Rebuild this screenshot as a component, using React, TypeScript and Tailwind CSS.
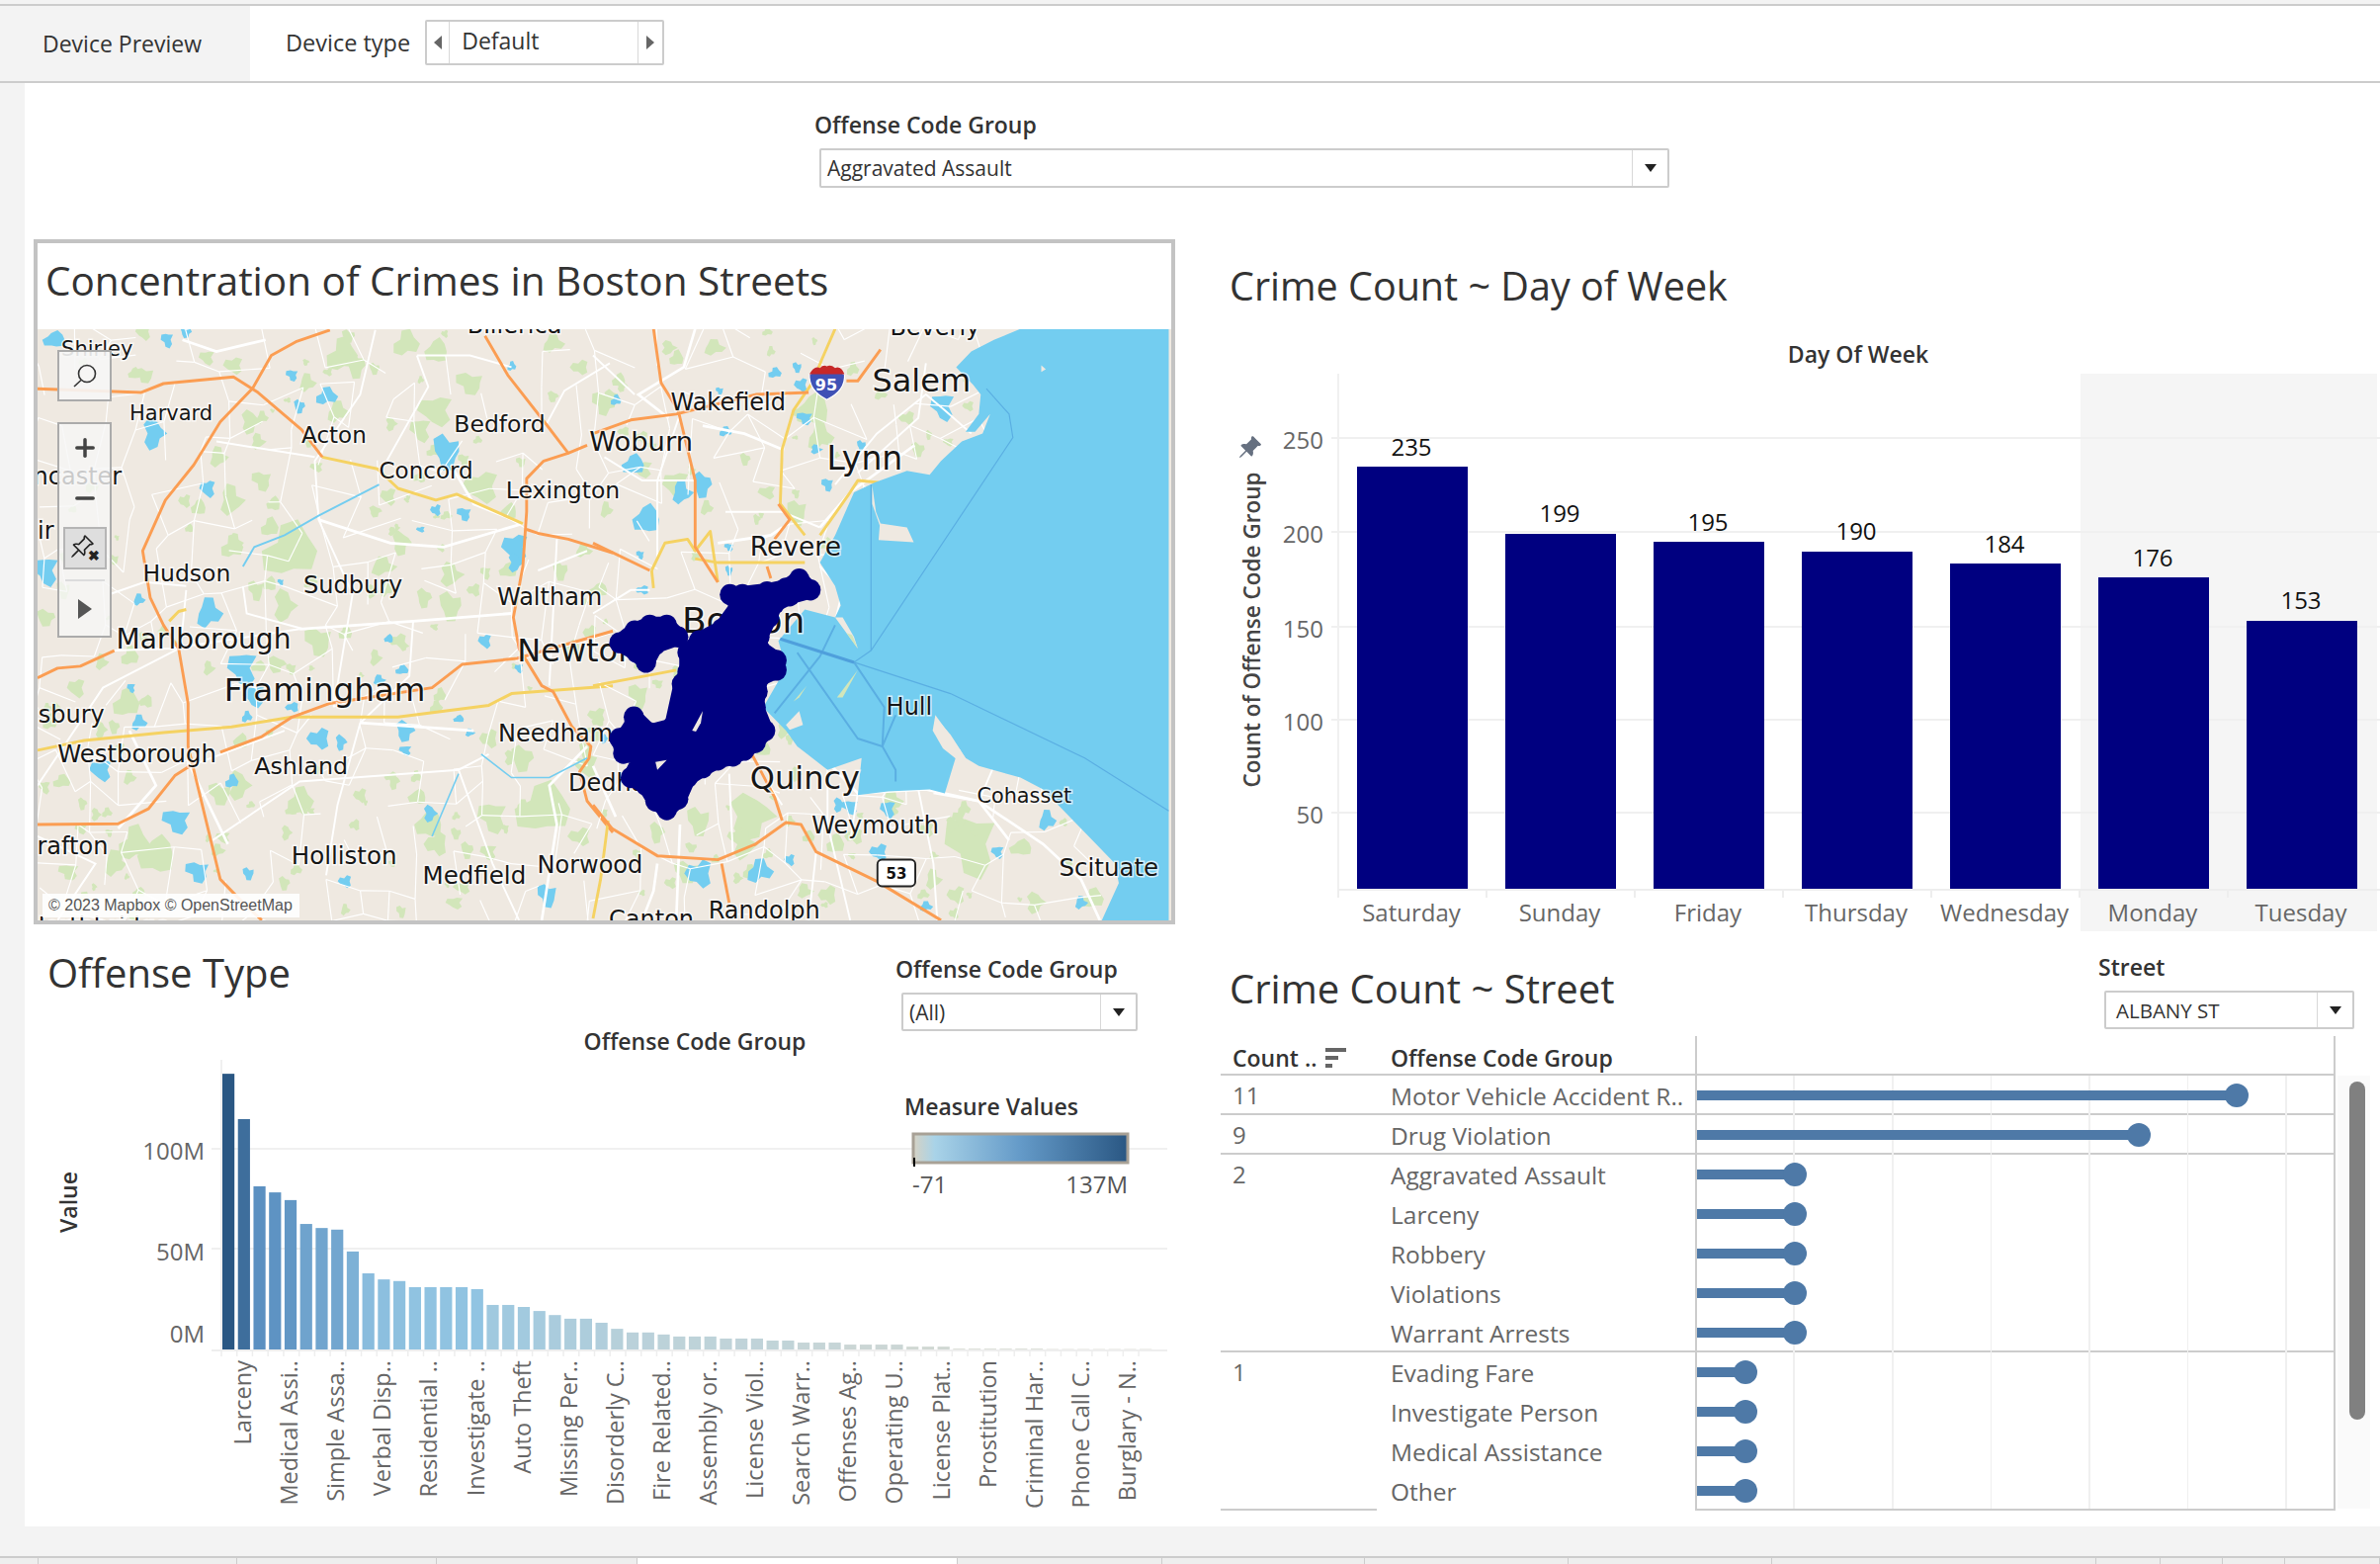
import { Minus, Plus } from 'lucide-react';
import { BsPinAngle, BsPinAngleFill } from 'react-icons/bs';

// map data is written in reference crop units, the two <g> transforms bring it to map pixels
type Blob = [number, number, number];

const greensWest: Blob[] = [
  [330, 150, 25], [495, 105, 18], [565, 125, 22], [850, 100, 35], [890, 125, 25], [760, 170, 20], [840, 245, 25],
  [1020, 70, 30], [1100, 90, 25], [1190, 170, 35], [1100, 240, 40], [1060, 290, 25], [1410, 205, 15], [1410, 70, 25],
  [1480, 130, 20], [1540, 220, 25], [610, 270, 25], [630, 320, 18], [525, 360, 22], [640, 420, 25], [560, 470, 30],
  [670, 480, 15], [710, 600, 62], [560, 590, 25], [660, 540, 20], [625, 700, 20], [700, 740, 30], [660, 685, 15],
  [785, 385, 15], [975, 460, 18], [1220, 435, 40], [1010, 580, 25], [960, 640, 30], [1140, 660, 30], [1140, 740, 30],
  [1070, 720, 20], [1200, 700, 15], [1290, 650, 20], [1430, 650, 20], [1490, 600, 20], [1530, 700, 20], [70, 770, 25],
  [790, 830, 35], [860, 810, 15], [1000, 830, 20], [680, 890, 25], [500, 900, 15], [290, 870, 20], [150, 950, 20],
  [280, 990, 30], [90, 1000, 15], [250, 1050, 15], [1100, 1000, 15], [1240, 1080, 20], [1330, 1130, 30], [1500, 1150, 25],
  [110, 1190, 20], [580, 1200, 30], [530, 1220, 30], [610, 1250, 10], [290, 1180, 15], [300, 1350, 35], [230, 1270, 12],
  [360, 1380, 40], [250, 1400, 25], [130, 1420, 25], [740, 1240, 30], [770, 1265, 10], [900, 1225, 15], [1050, 1230, 20],
  [1080, 1300, 30], [1250, 1280, 35], [1380, 1260, 62], [1240, 1370, 20], [1100, 1350, 25], [1480, 1330, 25], [990, 1190, 15],
  [700, 1450, 15], [170, 1500, 20], [1150, 1500, 20], [1170, 1460, 20],
];

const greensEast: Blob[] = [
  [200, 80, 20], [320, 80, 25], [50, 210, 20], [130, 390, 25], [220, 430, 30], [300, 490, 15], [35, 495, 15], [460, 450, 20],
  [580, 240, 35], [600, 310, 30], [760, 200, 15], [830, 260, 18], [860, 340, 18], [540, 500, 25], [470, 90, 10], [120, 970, 25],
  [10, 1020, 20], [280, 1290, 30], [420, 1280, 60], [400, 1350, 30], [640, 1350, 20], [560, 1470, 20], [170, 1320, 20],
  [1000, 1350, 62], [1130, 1360, 25], [1170, 1500, 25], [1320, 1490, 25], [900, 1440, 20], [790, 1240, 25], [250, 1420, 35],
  [620, 1480, 20], [960, 1480, 20], [460, 40, 12], [690, 1330, 20], [980, 1260, 15],
];

const lakesWest: Blob[] = [
  [90, 60, 25], [390, 60, 15], [440, 40, 15], [720, 150, 15], [810, 205, 25], [740, 230, 15], [355, 300, 30], [1130, 345, 35],
  [1300, 128, 10], [497, 440, 18], [1175, 505, 18], [1100, 495, 12], [1060, 545, 10], [1310, 590, 30], [1310, 630, 20],
  [70, 650, 30], [315, 725, 14], [500, 760, 30], [690, 680, 8], [975, 825, 10], [590, 900, 35], [620, 970, 25], [1010, 905, 15],
  [950, 930, 15], [1020, 1060, 25], [1160, 1030, 12], [1190, 1065, 12], [790, 1080, 25], [850, 1090, 15], [1020, 1110, 15],
  [560, 1190, 15], [315, 1040, 18], [295, 950, 10], [215, 1160, 25], [415, 1290, 35], [470, 1420, 30], [605, 1425, 15],
  [860, 1445, 15], [1085, 1272, 18], [1395, 1480, 25], [720, 1000, 15], [600, 1025, 12], [1320, 900, 10], [1230, 830, 15],
];

const lakesEast: Blob[] = [
  [60, 215, 12], [335, 190, 10], [350, 295, 15], [540, 130, 12], [550, 175, 15], [480, 145, 15], [560, 260, 20], [590, 340, 15],
  [710, 330, 12], [620, 430, 15], [105, 380, 25], [290, 430, 25], [235, 450, 25], [140, 520, 30], [130, 700, 15], [125, 610, 10],
  [360, 590, 12], [360, 650, 10], [440, 1420, 30], [280, 1425, 30], [650, 1250, 15], [680, 1255, 20], [780, 1260, 18],
  [1070, 1370, 15], [1200, 1290, 20], [755, 1370, 20], [30, 1080, 10], [520, 1390, 12], [880, 1510, 15], [1290, 1500, 15],
  [925, 230, 28],
];

const whiteWest = [
  '430,60 520,90 650,60', '940,35 900,200 780,370 790,520 880,710 830,1000', '520,320 780,360', '790,520 980,580 1120,590 1330,530',
  '240,710 330,680 440,690', '440,700 430,800 420,850', '740,800 1040,780 1300,760', '250,855 400,850 740,800',
  '1040,780 1030,920 900,1040 840,1250 810,1430', '900,1040 1200,1060', '47,1200 220,950 420,850', '450,1150 700,1060',
  '450,1150 550,1350', '510,1340 740,1190 1160,1160 1240,1120', '1050,100 1080,180 970,370', '1140,380 1200,480 1330,530',
  '1300,130 1190,100 1050,100', '1370,650 1500,600', '1310,880 1560,810', '1420,570 1410,760 1400,945', '1560,120 1440,190 1390,280',
  '1500,1100 1400,1200 1420,1300 1380,1545', '1160,1160 1250,1400 1320,1545', '47,1330 200,1400 100,1545', '290,1060 360,1200 260,1310',
  '590,690 600,760 750,800',
];

const whiteEast = [
  '270,32 240,130 120,200 200,260', '0,100 110,200', '230,250 170,420 170,620', '290,280 400,300 500,340', '30,360 130,420 270,420',
  '880,120 860,260 700,400', '600,540 680,450 850,330', '1000,300 930,240 880,200 750,300 640,430', '350,500 500,500 600,540',
  '330,580 470,560 500,540', '0,760 100,700 150,700', '500,870 560,850', '500,1020 620,1140 700,1220 880,1210 1020,1240 1190,1350 1290,1440 1340,1545',
  '620,1140 620,1300 680,1545', '360,1170 370,1380', '230,1300 220,1545', '700,1220 680,1340', '860,1210 900,1400 910,1545',
  '1020,1240 1100,1340', '1060,1150 1020,1240 900,1220', '440,1160 500,1250', '0,1150 60,1280', '640,780 660,700 600,640',
  '590,1370 570,1545', '170,1400 160,1470 130,1545',
];

const orangeWest = [
  '47,185 320,195 380,172 565,155 630,195 745,290 800,360',
  '1340,545 1370,555 1450,570 1568,605',
  '820,35 730,65 665,100 615,185 530,270 460,380 385,470 325,600 345,720 380,790 420,850 445,990 445,1100 490,1280 530,1440 580,1490 640,1545',
  '47,925 100,900 160,895 250,855',
  '530,1115 640,1075 720,1025 820,990 1090,950 1170,890 1315,875 1568,805',
  '1230,50 1290,150 1395,280 1450,350 1500,330',
  '1450,350 1385,370 1340,415 1340,500 1330,640 1305,770 1320,850 1380,945 1410,960 1460,1050 1510,1100 1505,1130 1480,1165 1500,1240 1568,1320',
  '47,1300 260,1298 340,1260 410,1175 450,1150',
];

const yellowWest = [
  '800,360 945,390 1000,440 1100,470 1155,455 1330,530',
  '47,1110 170,1085 380,1065 560,1050 720,1025 1000,1025 1240,995 1300,965 1568,945',
  '395,780 420,755 440,750',
];

const orangeEast = [
  '0,580 150,650', '160,32 180,170 225,240 270,420 270,590 330,680', '0,300 100,265 220,250 430,200 570,195', '760,85 700,165 670,165',
  '0,1250 50,1310 170,1380 330,1390 430,1350 510,1295 550,1300 590,1370 750,1445 920,1545', '500,1290 480,1230 420,1120', '340,1400 360,1500',
  '490,480 520,520 480,570', '460,640 470,670',
];

const yellowEast = [
  '640,32 605,110 580,170 530,240 500,340 495,480 560,560', '270,620 330,630 560,630', '600,560 680,450 700,420 755,425',
  '155,650 160,695', '155,650 190,580 250,570 270,600 310,550 330,680', '0,945 220,905', '40,1290 20,1440 0,1540',
];

const lanes = [
  '495,825 690,885 735,855 1110,310 1100,250 1040,185', '735,855 735,430', '690,885 945,965 1300,1130 1522,1265',
  '690,885 770,1000 765,1100 800,1160 800,1190', '540,860 700,1080 765,1100', '800,1020 765,1100', '640,790 600,870 480,1015',
];

const sea =
  '1130,32 1522,32 1522,1545 1345,1545 1390,1450 1380,1400 1290,1310 1250,1270 1190,1210 1130,1180 1020,1150 985,1130 945,1070 905,1025 925,1090 960,1125 930,1220 890,1210 780,1215 700,1225 710,1130 620,1160 540,1100 510,1060 450,1000 510,900 490,830 560,750 640,770 655,740 640,690 600,630 640,560 690,450 745,425 830,395 890,405 920,370 975,320 1030,300 1050,250 1010,295 985,295 1020,250 1025,200 1005,175 960,130 1000,90 1060,60';

// bits of land lying on the sea polygon: Nahant, Hull, Squantum, Winthrop spit, islands
const seaLand = [
  '738,432 748,500 760,530 830,540 848,578 755,572 758,535 738,480',
  '985,1130 950,1080 905,1020 898,1060 925,1105 970,1140',
  '510,1045 545,1010 555,1045 520,1058',
  '640,770 670,810 700,850 690,820 660,770',
  '1185,125 1197,135 1185,142',
];

const blobOutline: [number, number][] = [
  [545, 672], [575, 700], [520, 715], [480, 735], [465, 770], [440, 820], [440, 850], [485, 880], [485, 905], [440, 925], [435, 960],
  [430, 1000], [455, 1060], [430, 1090], [400, 1110], [370, 1125], [330, 1135], [290, 1155], [250, 1180], [225, 1235], [195, 1262],
  [165, 1240], [140, 1200], [100, 1180], [130, 1125], [80, 1118], [70, 1080], [100, 1060], [108, 1025], [150, 1065], [210, 1050],
  [235, 940], [250, 910], [250, 860], [280, 830], [340, 800], [385, 740], [362, 712], [395, 712], [460, 705], [510, 695],
];

const blobWest: [number, number][] = [
  [70, 835], [110, 805], [150, 790], [195, 790], [225, 820], [165, 840], [140, 885], [115, 860],
];

const westLabels: [string, number, number, number][] = [
  ['Shirley', 110, 100, 21], ['Harvard', 290, 265, 21], ['Bedford', 1148, 295, 23.5], ['Acton', 745, 323, 23], ['Concord', 950, 415, 23],
  ['Lexington', 1285, 465, 23.5], ['Hudson', 325, 678, 23.5], ['Sudbury', 750, 708, 24], ['Waltham', 1262, 738, 24], ['Marlborough', 255, 850, 28],
  ['Newton', 1315, 882, 32], ['Framingham', 540, 985, 32.5], ['Westborough', 100, 1140, 24.3], ['Ashland', 620, 1170, 23.7], ['Needham', 1265, 1087, 24],
  ['Holliston', 718, 1402, 24.5], ['Medfield', 1065, 1452, 24.5], ['Norwood', 1368, 1423, 24], ['Grafton', -3, 1375, 24], ['Shrewsbury', -145, 1040, 24],
  ['Lancaster', -38, 430, 24], ['ir', 47, 570, 24], ['Dedham', 1450, 1215, 24], ['Billerica', 1183, 42, 24], ['Northbridge', 20, 1580, 24],
];

const eastLabels: [string, number, number, number][] = [
  ['Beverly', 785, 47, 24], ['Wakefield', 205, 240, 24], ['Woburn', -10, 345, 27.3], ['Salem', 738, 192, 32], ['Lynn', 618, 392, 33], ['Revere', 415, 612, 26.5],
  ['Boston', 235, 810, 36], ['Hull', 775, 1018, 24], ['Quincy', 415, 1208, 32], ['Cohasset', 1015, 1245, 20.8], ['Weymouth', 578, 1322, 23.9],
  ['Scituate', 1232, 1432, 24.5], ['Randolph', 305, 1540, 24], ['Canton', 42, 1562, 24],
];

const blobPoints = ([cx, cy, r]: Blob) => {
  const pts: string[] = [];
  const squash = 0.7 + 0.5 * Math.abs(Math.sin(cx * 0.13 + cy * 0.07));
  for (let i = 0; i < 10; i++) {
    const wob = 0.5 + 0.8 * Math.abs(Math.sin(cx * 0.37 + cy * 0.11 + i * 2.3));
    const a = (i / 10) * Math.PI * 2;
    pts.push(`${(cx + Math.cos(a) * r * wob).toFixed(1)},${(cy + Math.sin(a) * r * wob * squash).toFixed(1)}`);
  }
  return pts.join(' ');
};

// little generator so the small-road mesh and the small parks stay the same on every render
const seeded = (seed: number) => () => {
  seed = (seed * 16807) % 2147483647;
  return seed / 2147483647;
};

const smallRoads = (seed: number, x0: number, x1: number) => {
  const rnd = seeded(seed);
  const step = 85;
  const grid: [number, number][][] = [];
  for (let gx = x0; gx <= x1; gx += step) {
    const col: [number, number][] = [];
    for (let gy = 30; gy <= 1560; gy += step) col.push([gx + (rnd() - 0.5) * 70, gy + (rnd() - 0.5) * 70]);
    grid.push(col);
  }
  const out: string[] = [];
  grid.forEach((col, i) =>
    col.forEach((p, j) => {
      if (grid[i + 1] && rnd() < 0.5) out.push(`${p.join(',')} ${grid[i + 1][j].join(',')}`);
      if (col[j + 1] && rnd() < 0.5) out.push(`${p.join(',')} ${col[j + 1].join(',')}`);
    }),
  );
  return out;
};

const smallParks = (seed: number, x0: number, x1: number, n: number): Blob[] => {
  const rnd = seeded(seed);
  return Array.from({ length: n }, () => [x0 + rnd() * (x1 - x0), 30 + rnd() * 1510, 6 + rnd() * 12] as Blob);
};

const meshWest = smallRoads(4711, 40, 1568);
const meshEast = smallRoads(9127, 10, 1400);
const parksWest = smallParks(2203, 40, 1568, 110);
const parksEast = smallParks(6151, 0, 1400, 90);

function MapLayers({ greens, lakes, white, orange, yellow, mesh }: { greens: Blob[]; lakes: Blob[]; white: string[]; orange: string[]; yellow: string[]; mesh: string[] }) {
  return (
    <>
      {greens.map((b, i) => <polygon key={i} points={blobPoints(b)} fill="#d2e6ba" />)}
      {lakes.map((b, i) => <polygon key={i} points={blobPoints(b)} fill="#73cdf0" />)}
      {mesh.map((p, i) => <polyline key={i} points={p} fill="none" stroke="#fff" strokeWidth={3} />)}
      {white.map((p, i) => <polyline key={i} points={p} fill="none" stroke="#fff" strokeWidth={i % 3 === 0 ? 7 : 5} />)}
      {yellow.map((p, i) => <polyline key={i} points={p} fill="none" stroke="#f5d262" strokeWidth={7.5} strokeLinejoin="round" />)}
      {orange.map((p, i) => <polyline key={i} points={p} fill="none" stroke="#fb9d52" strokeWidth={7.5} strokeLinejoin="round" />)}
    </>
  );
}

function MapLabel({ text, x, y, size }: { text: string; x: number; y: number; size: number }) {
  return (
    <text x={x} y={y} fontSize={size} fill="#161616" stroke="#ffffff" strokeOpacity={0.7} strokeWidth={3} paintOrder="stroke">
      {text}
    </text>
  );
}

function BostonMap() {
  return (
    <div className="relative h-[598px] w-[1147px] overflow-hidden">
      <svg viewBox="0 0 1147 598" className="block h-[598px] w-[1147px] font-['DejaVu_Sans',sans-serif]">
        <rect width="1147" height="598" fill="#efe9e1" />
        <g transform="translate(-18,-13) scale(.3827,.3954)">
          <MapLayers greens={[...greensWest, ...parksWest]} lakes={lakesWest} white={whiteWest} orange={orangeWest} yellow={yellowWest} mesh={meshWest} />
          <polyline points="590,640 620,590 700,560 790,510 870,470 950,430" fill="none" stroke="#73cdf0" strokeWidth={5} />
          <polyline points="1220,1120 1300,1180 1400,1180 1500,1130" fill="none" stroke="#73cdf0" strokeWidth={4} />
          <polyline points="1160,1170 1090,1330" fill="none" stroke="#73cdf0" strokeWidth={4} />
        </g>
        <g transform="translate(562,-13) scale(.3827,.3954)">
          <MapLayers greens={[...greensEast, ...parksEast]} lakes={lakesEast} white={whiteEast} orange={orangeEast} yellow={yellowEast} mesh={meshEast} />
          <polygon points={sea} fill="#73cdf0" />
          {seaLand.map((p, i) => <polygon key={i} points={p} fill="#efe9e1" />)}
          {lanes.map((p, i) => <polyline key={i} points={p} fill="none" stroke="#5aaee2" strokeWidth={i > 2 ? 5 : 3} />)}
          <polyline points="495,825 690,885" fill="none" stroke="#4f9fdc" strokeWidth={8} />
          <polygon points="680,930 700,905 660,975 645,975" fill="#d2e6ba" />
          <polygon points="530,985 565,945 545,975" fill="#d2e6ba" />
          <polygon points="670,810 700,850 685,815" fill="#d2e6ba" />
        </g>
        {westLabels.map(([t, x, y, s]) => <MapLabel key={t} text={t} x={x * 0.3827 - 18} y={y * 0.3954 - 13} size={s} />)}
        {eastLabels.map(([t, x, y, s]) => <MapLabel key={t} text={t} x={x * 0.3827 + 562} y={y * 0.3954 - 13} size={s} />)}
        <g transform="translate(562,-13) scale(.3827,.3954)">
          <path d="M572,148 Q595,138 618,128 Q642,138 665,148 Q668,190 618,213 Q570,190 572,148Z" fill="#3f51b5" stroke="#fff" strokeWidth={3} />
          <path d="M572,148 Q585,125 600,132 Q610,122 618,128 Q628,122 640,132 Q655,125 665,148Z" fill="#c62828" />
          <rect x="752" y="1390" width="100" height="68" rx="12" fill="#fff" stroke="#222" strokeWidth={5} />
          <polygon points={blobOutline.map((p) => p.join(',')).join(' ')} fill="#000080" stroke="#000080" strokeWidth={44} strokeLinejoin="round" />
          <polygon points={blobWest.map((p) => p.join(',')).join(' ')} fill="#000080" stroke="#000080" strokeWidth={44} strokeLinejoin="round" />
          {blobOutline.map(([x, y], i) => <circle key={i} cx={x} cy={y} r={27} fill="#000080" />)}
          {blobWest.map(([x, y], i) => <circle key={i} cx={x} cy={y} r={27} fill="#000080" />)}
          <polygon points="290,1010 262,1060 272,1062 285,1040" fill="#efe9e1" />
          <polygon points="165,1140 195,1135 170,1160" fill="#efe9e1" />
        </g>
        <text x="798" y="62" fontSize="16" fontWeight="700" fill="#fff" textAnchor="middle">95</text>
        <text x="869" y="556" fontSize="15" fontWeight="700" fill="#111" textAnchor="middle">53</text>
      </svg>

      {/* map tools */}
      <div className="absolute left-[20px] top-[21px] flex h-[52px] w-[55px] items-center justify-center border-2 border-[#ababab] bg-[#f6f6f6]/90">
        <svg viewBox="0 0 26 26" className="h-[26px] w-[26px]" fill="none" stroke="#333" strokeWidth="1.6">
          <circle cx="15" cy="11" r="8.5" />
          <line x1="9" y1="17.5" x2="2" y2="24" />
        </svg>
      </div>
      <div className="absolute left-[20px] top-[94px] flex h-[218px] w-[55px] flex-col items-center border-2 border-[#ababab] bg-[#f6f6f6]/80">
        <Plus className="mt-[10px] text-[#444]" size={28} strokeWidth={3} />
        <Minus className="mt-[23px] text-[#444]" size={28} strokeWidth={3} />
        <div className="mt-[15px] flex h-[43px] w-[44px] items-center justify-center border-2 border-[#b5b5b5] bg-[#dedede]">
          <BsPinAngle className="-mt-[4px] text-[#222]" size={26} />
          <span className="-ml-[7px] mt-[14px] text-[14px] font-bold leading-none text-[#222]">✖</span>
        </div>
        <div className="mt-[10px] h-[2px] w-[40px] bg-[#dcdcdc]" />
        <svg viewBox="0 0 14 20" className="mt-[18px] h-[20px] w-[14px]">
          <polygon points="0,0 14,10 0,20" fill="#555" />
        </svg>
      </div>
      <div className="absolute bottom-[3px] left-[5px] h-[24px] w-[260px] bg-white/90 pl-[6px] font-['Liberation_Sans',sans-serif] text-[16px] leading-[24px] text-[#555]">
        © 2023 Mapbox © OpenStreetMap
      </div>
    </div>
  );
}

function Arrow({ className, d }: { className?: string; d: 'down' | 'left' | 'right' }) {
  const pts = d === 'down' ? '0,0 12,0 6,8' : d === 'left' ? '8,0 8,14 0,7' : '0,0 8,7 0,14';
  const box = d === 'down' ? '0 0 12 8' : '0 0 8 14';
  return (
    <svg viewBox={box} className={className}>
      <polygon points={pts} fill={d === 'down' ? '#222' : '#666'} />
    </svg>
  );
}

function Dropdown({ text, className }: { text: string; className: string }) {
  return (
    <div className={`flex items-stretch rounded-[2px] border-2 border-[#cccccc] bg-white ${className}`}>
      <div className="flex flex-1 items-center pl-[6px] pt-[2px] text-[21px] text-[#333]">{text}</div>
      <div className="flex w-[36px] items-center justify-center border-l border-[#d8d8d8]">
        <Arrow d="down" className="h-[8px] w-[12px]" />
      </div>
    </div>
  );
}

const days = [
  { day: 'Saturday', n: 235, x: 1373, top: 472, ly: 452 },
  { day: 'Sunday', n: 199, x: 1523, top: 540, ly: 519 },
  { day: 'Friday', n: 195, x: 1673, top: 548, ly: 528 },
  { day: 'Thursday', n: 190, x: 1823, top: 558, ly: 537 },
  { day: 'Wednesday', n: 184, x: 1973, top: 570, ly: 550 },
  { day: 'Monday', n: 176, x: 2123, top: 584, ly: 564 },
  { day: 'Tuesday', n: 153, x: 2273, top: 628, ly: 607 },
];

const ticks: [string, number][] = [['250', 443], ['200', 538], ['150', 634], ['100', 728], ['50', 822]];

function DayChart() {
  return (
    <svg viewBox="1200 338 1208 607" className="block h-[607px] w-[1208px]">
      <rect x="2105" y="378" width="300" height="564" fill="#f5f5f5" />
      {ticks.map(([t, y]) => (
        <g key={t}>
          <line x1="1347" x2="2408" y1={y} y2={y} stroke="#f0f0f0" strokeWidth="2" />
          <text x="1339" y={y + 11} textAnchor="end" fontSize="24" fill="#666">{t}</text>
        </g>
      ))}
      <line x1="1354" x2="1354" y1="378" y2="900" stroke="#f0f0f0" strokeWidth="2" />
      <line x1="1354" x2="2408" y1="900" y2="900" stroke="#eeeeee" strokeWidth="2" />
      {days.map((d) => (
        <g key={d.day}>
          <rect x={d.x} y={d.top} width="112" height={899 - d.top} fill="#000080" />
          <text x={d.x + 55} y={d.ly + 9} textAnchor="middle" fontSize="24" fill="#111">{d.n}</text>
          <text x={d.x + 55} y="932" textAnchor="middle" fontSize="24" fill="#666">{d.day}</text>
          <line x1={d.x - 19} x2={d.x - 19} y1="900" y2="908" stroke="#eeeeee" strokeWidth="2" />
        </g>
      ))}
      <text x="1880" y="367" textAnchor="middle" fontSize="23" fontWeight="600" fill="#333">Day Of Week</text>
      <text transform="translate(1275,637) rotate(-90)" textAnchor="middle" fontSize="22.5" fontWeight="600" fill="#444">Count of Offense Code Group</text>
      <foreignObject x="1252" y="440" width="26" height="26">
        <BsPinAngleFill className="text-[#667080]" size={25} />
      </foreignObject>
    </svg>
  );
}

const offenseTops = [
  357, 469, 635, 650, 669, 728, 738, 742, 796, 850, 865, 869, 884, 884, 884, 884, 889, 928, 928, 933, 943, 953, 962, 962, 972, 987, 996, 996,
  1001, 1006, 1006, 1006, 1011, 1011, 1011, 1016, 1016, 1021, 1021, 1021, 1026, 1026, 1026, 1026, 1031, 1031, 1031, 1036, 1036, 1036, 1036,
  1036, 1036, 1037, 1037, 1037, 1037, 1037, 1037, 1037,
];

const offenseLabels = [
  'Larceny', 'Medical Assi..', 'Simple Assa..', 'Verbal Disp..', 'Residential ..', 'Investigate ..', 'Auto Theft', 'Missing Per..', 'Disorderly C..',
  'Fire Related..', 'Assembly or..', 'License Viol..', 'Search Warr..', 'Offenses Ag..', 'Operating U..', 'License Plat..', 'Prostitution', 'Criminal Har..',
  'Phone Call C..', 'Burglary - N..',
];

const mix = (a: number[], b: number[], t: number) => {
  const c = a.map((v, i) => Math.round(v + (b[i] - v) * t));
  return `rgb(${c[0]},${c[1]},${c[2]})`;
};

const barColor = (t: number) => {
  if (t < 0.03) return mix([216, 218, 208], [194, 212, 216], t / 0.03);
  if (t < 0.22) return mix([194, 212, 216], [145, 196, 226], (t - 0.03) / 0.19);
  if (t < 0.6) return mix([145, 196, 226], [90, 143, 192], (t - 0.22) / 0.38);
  return mix([90, 143, 192], [42, 87, 131], (t - 0.6) / 0.4);
};

function OffenseChart() {
  return (
    <svg viewBox="25 1044 1175 500" className="block h-[500px] w-[1175px]">
      <text x="703" y="1062" textAnchor="middle" fontSize="23" fontWeight="600" fill="#333">Offense Code Group</text>
      <text transform="translate(78,1216) rotate(-90)" textAnchor="middle" fontSize="23" fontWeight="600" fill="#333">Value</text>
      <line x1="224" x2="224" y1="1072" y2="1366" stroke="#f0f0f0" strokeWidth="2" />
      <line x1="214" x2="1181" y1="1162" y2="1162" stroke="#f0f0f0" strokeWidth="2" />
      <line x1="214" x2="1181" y1="1263" y2="1263" stroke="#f0f0f0" strokeWidth="2" />
      <line x1="214" x2="1181" y1="1366" y2="1366" stroke="#eeeeee" strokeWidth="2" />
      <text x="207" y="1173" textAnchor="end" fontSize="24" fill="#666">100M</text>
      <text x="207" y="1275" textAnchor="end" fontSize="24" fill="#666">50M</text>
      <text x="207" y="1358" textAnchor="end" fontSize="24" fill="#666">0M</text>
      {offenseTops.map((top, i) => {
        const h = (1038 - top) / 2.442;
        return (
          <g key={i}>
            <rect x={225 + i * 15.73} y={1365 - h} width="12.2" height={h} fill={barColor(h / 279)} />
            <line x1={224 + i * 15.73} x2={224 + i * 15.73} y1="1366" y2="1372" stroke="#eeeeee" strokeWidth="1.5" />
          </g>
        );
      })}
      {offenseLabels.map((t, i) => (
        <text key={t} transform={`translate(${254 + i * 47.1},1376) rotate(-90)`} textAnchor="end" fontSize="23.5" fill="#666">{t}</text>
      ))}
      <text x="915" y="1128" fontSize="23" fontWeight="600" fill="#333">Measure Values</text>
      <defs>
        <linearGradient id="legend">
          <stop offset="0" stopColor="#d6d2c4" />
          <stop offset="0.1" stopColor="#a9d3e8" />
          <stop offset="0.5" stopColor="#649ac8" />
          <stop offset="1" stopColor="#2a5783" />
        </linearGradient>
      </defs>
      <rect x="924" y="1147" width="217" height="29" fill="url(#legend)" stroke="#a8a196" strokeWidth="3" />
      <line x1="925" x2="925" y1="1171" y2="1180" stroke="#000" strokeWidth="2" />
      <text x="923" y="1207" fontSize="24" fill="#555">-71</text>
      <text x="1141" y="1207" textAnchor="end" fontSize="24" fill="#555">137M</text>
    </svg>
  );
}

const streetGroups = [
  { n: 11, names: ['Motor Vehicle Accident R..'] },
  { n: 9, names: ['Drug Violation'] },
  { n: 2, names: ['Aggravated Assault', 'Larceny', 'Robbery', 'Violations', 'Warrant Arrests'] },
  { n: 1, names: ['Evading Fare', 'Investigate Person', 'Medical Assistance', 'Other'] },
];

function StreetTable() {
  return (
    <div className="ml-[35px] flex">
      <div className="w-[1128px]">
        <div className="flex h-[44px]">
          <div className="flex w-[172px] items-end gap-[8px] pb-[2px] pl-[12px] text-[23px] font-semibold leading-[32px] text-[#333]">
            Count ..
            <svg viewBox="0 0 21 20" className="mb-[6px] h-[20px] w-[21px]">
              <rect width="21" height="4" fill="#666" />
              <rect y="8" width="13" height="4" fill="#666" />
              <rect y="16" width="7" height="4" fill="#666" />
            </svg>
          </div>
          <div className="flex w-[308px] items-end pb-[2px] text-[23px] font-semibold leading-[32px] text-[#333]">Offense Code Group</div>
          <div className="mt-[4px] w-[648px] border-x-2 border-[#cccccc]" />
        </div>
        {streetGroups.map((g) => (
          <div key={g.n} className="-mt-[2px] border-t-2 border-[#cccccc]">
            {g.names.map((name, i) => (
              <div key={name} className="flex h-10">
                <div className="w-[172px] pl-[12px] text-[24px] leading-[39px] text-[#666]">{i === 0 ? g.n : ''}</div>
                <div className="w-[308px] truncate text-[24.5px] leading-[42px] text-[#666]">{name}</div>
                <div className="flex w-[648px] items-center border-x-2 border-[#cccccc] bg-[repeating-linear-gradient(90deg,transparent_0,transparent_97.5px,#f0f0f0_97.5px,#f0f0f0_99.5px)]">
                  <div className="h-[10px] bg-[#4e79a7]" style={{ width: 49.75 * g.n - 1 }} />
                  <div className="-ml-[12px] -mt-[1px] h-6 w-6 rounded-full bg-[#4e79a7]" />
                </div>
              </div>
            ))}
          </div>
        ))}
        <div className="-mt-[2px] flex h-[2px]">
          <div className="w-[158px] bg-[#cccccc]" />
          <div className="w-[322px]" />
          <div className="w-[648px] bg-[#cccccc]" />
        </div>
      </div>
      <div className="ml-[2px] mt-[44px] h-[438px] w-[33px] bg-[#fafafa] pl-[12px] pt-[6px]">
        <div className="h-[342px] w-[16px] rounded-full bg-[#808080]" />
      </div>
    </div>
  );
}

const tabEdges = [0, 39, 240, 442, 645, 969, 1176, 1381, 1587, 1793, 2121, 2186, 2249, 2312, 2408];

export default function App() {
  return (
    <div className="flex h-[1582px] w-[2408px] flex-col overflow-hidden bg-white font-['Open_Sans',sans-serif] text-[#333]">
      <div className="h-1 bg-[#f3f3f3]" />
      <header className="flex h-[80px] items-stretch border-y-2 border-[#cccccc]">
        <div className="flex w-[253px] items-center bg-[#f3f3f3] pl-[43px] text-[23px] text-[#333]">Device Preview</div>
        <div className="ml-[36px] flex items-center text-[23.5px] text-[#333]">Device type</div>
        <div className="ml-[15px] mt-[14px] flex h-[46px] w-[242px] rounded-[2px] border-2 border-[#cccccc]">
          <div className="flex w-[23px] items-center justify-center border-r border-[#d8d8d8]">
            <Arrow d="left" className="h-[14px] w-[8px]" />
          </div>
          <div className="flex-1 pl-[12px] text-[23px] leading-[38px] text-[#333]">Default</div>
          <div className="flex w-[25px] items-center justify-center border-l border-[#d8d8d8]">
            <Arrow d="right" className="h-[14px] w-[8px]" />
          </div>
        </div>
      </header>

      <div className="flex h-[1460px]">
        <div className="w-[25px] bg-[#f3f3f3]" />
        <main className="w-[2383px]">
          <div className="h-[158px] pl-[799px] pt-[24px]">
            <div className="h-[42px] text-[23px] font-semibold leading-[36px] text-[#333]">Offense Code Group</div>
            <Dropdown text="Aggravated Assault" className="ml-[5px] h-[40px] w-[860px]" />
          </div>

          <div className="flex h-[703px]">
            <div className="w-[1175px] pl-[9px]">
              <section className="h-[693px] w-[1155px] border-4 border-[#c3c3c3]">
                <h2 className="h-[87px] pl-[8px] text-[40.5px] font-normal leading-[75px] text-[#333]">Concentration of Crimes in Boston Streets</h2>
                <BostonMap />
              </section>
            </div>
            <section className="w-[1208px]">
              <h2 className="flex h-[96px] items-center pl-[44px] text-[39.5px] font-normal text-[#333]">Crime Count ~ Day of Week</h2>
              <DayChart />
            </section>
          </div>

          <div className="flex h-[599px]">
            <section className="w-[1175px]">
              <div className="flex h-[99px] justify-between pl-[23px] pr-[49px]">
                <h2 className="flex h-[78px] items-center text-[40px] font-normal text-[#333]">Offense Type</h2>
                <div className="w-[245px] pt-[17px]">
                  <div className="h-[42px] text-[23px] font-semibold leading-[36px] text-[#333]">Offense Code Group</div>
                  <Dropdown text="(All)" className="ml-[6px] h-[39px] w-[239px]" />
                </div>
              </div>
              <OffenseChart />
            </section>
            <section className="w-[1208px]">
              <div className="flex h-[99px] justify-between pl-[44px] pr-[26px]">
                <h2 className="flex h-[110px] items-center text-[40px] font-normal text-[#333]">Crime Count ~ Street</h2>
                <div className="w-[259px] pt-[15px]">
                  <div className="h-[42px] text-[23px] font-semibold leading-[36px] text-[#333]">Street</div>
                  <Dropdown text="ALBANY ST" className="ml-[6px] h-[39px] w-[253px] [&>div:first-child]:pl-[10px] [&>div:first-child]:text-[20.5px]" />
                </div>
              </div>
              <StreetTable />
            </section>
          </div>
        </main>
      </div>

      <div className="h-[30px] bg-[#f3f3f3]" />
      <footer className="flex h-2 border-t-2 border-[#cccccc] bg-[#eeeeee]">
        {tabEdges.slice(1).map((edge, i) => (
          <div
            key={edge}
            className={i === 4 ? 'border-r border-[#cccccc] bg-white' : 'border-r border-[#cccccc]'}
            style={{ width: edge - tabEdges[i] }}
          />
        ))}
      </footer>
    </div>
  );
}
